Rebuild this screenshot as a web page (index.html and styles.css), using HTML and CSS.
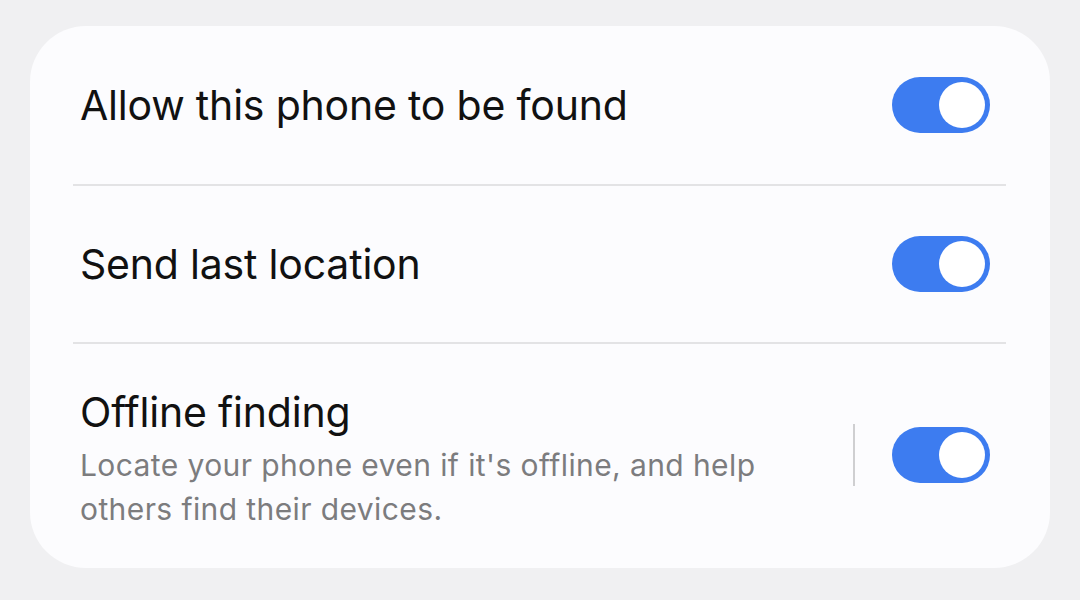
FILE: index.html
```html
<!DOCTYPE html>
<html>
<head>
<meta charset="utf-8">
<link rel="stylesheet" href="styles.css">
</head>
<body>
<div class="card">
  <div class="row row-simple">
    <div class="title">Allow this phone to be found</div>
    <div class="toggle"><div class="thumb"></div></div>
  </div>
  <div class="divider"></div>
  <div class="row row-simple row-second">
    <div class="title">Send last location</div>
    <div class="toggle"><div class="thumb"></div></div>
  </div>
  <div class="divider"></div>
  <div class="row row-detail">
    <div class="texts">
      <div class="title">Offline finding</div>
      <div class="sub">Locate your phone even if it's offline, and help others find their devices.</div>
    </div>
    <div class="vsep"></div>
    <div class="toggle"><div class="thumb"></div></div>
  </div>
</div>
</body>
</html>
```
FILE: styles.css
```css
html, body {
  margin: 0;
  padding: 0;
}
body {
  background: #f0f0f2;
  width: 1080px;
  height: 600px;
  overflow: hidden;
  font-family: "Inter", "Noto Sans", sans-serif;
  padding-top: 26px;
  box-sizing: border-box;
}
.card {
  margin: 0 30px;
  height: 542px;
  background: #fcfcfe;
  border-radius: 56px;
  padding: 0 44px 0 43px;
  box-sizing: border-box;
}
.row {
  display: flex;
  align-items: center;
  padding: 0 16px 0 7px;
}
.row-simple {
  height: 158px;
}
.row-second {
  height: 156px;
}
.divider {
  height: 2px;
  background: #e3e3e5;
}
.title {
  flex: 1;
  font-size: 41px;
  line-height: 50px;
  color: #111;
  letter-spacing: -0.2px;
}
.row-detail {
  padding-top: 43px;
  align-items: flex-start;
}
.texts {
  flex: 1;
}
.sub {
  font-size: 30px;
  line-height: 44px;
  letter-spacing: 0.4px;
  color: #7c7c7e;
  margin-top: 6px;
  max-width: 700px;
}
.vsep {
  width: 2px;
  height: 62px;
  background: #cfcfd1;
  margin: 37px 37px 0 0;
}
.toggle {
  width: 98px;
  height: 56px;
  border-radius: 28px;
  background: #3d7cf0;
  box-sizing: border-box;
  padding: 5px;
  display: flex;
  justify-content: flex-end;
  flex: none;
}
.row-detail .toggle {
  margin-top: 40px;
}
.thumb {
  width: 46px;
  height: 46px;
  border-radius: 50%;
  background: #fff;
}
```
